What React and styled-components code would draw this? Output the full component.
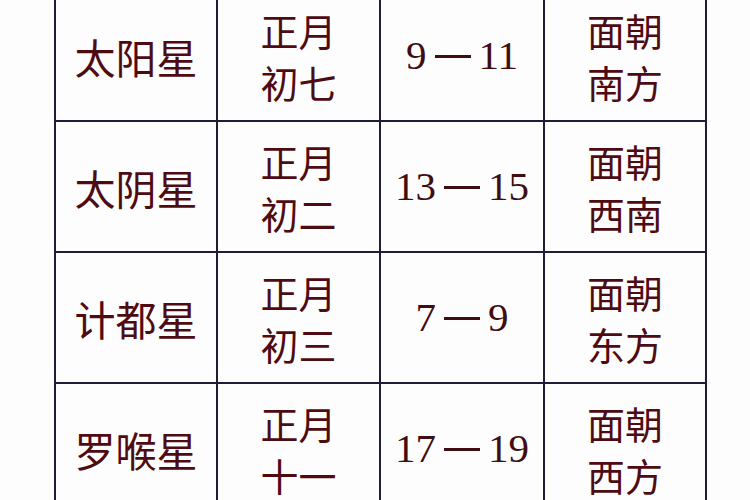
import React from "react";
import styled, { createGlobalStyle } from "styled-components";

const Global = createGlobalStyle`
  html, body {
    margin: 0;
    padding: 0;
    background: #ffffff;
    overflow: hidden;
  }
`;

const Page = styled.div`
  width: 750px;
  height: 500px;
  overflow: hidden;
  background: #fdfdfd;
`;

const Table = styled.div`
  display: grid;
  grid-template-columns: 162px 163px 164px 162px;
  grid-auto-rows: 131px;
  margin: -11px 0 0 54px;
  width: max-content;
  border-top: 2px solid #1d1d3a;
  border-left: 2px solid #1d1d3a;
`;

const Cell = styled.div`
  display: flex;
  flex-direction: column;
  align-items: center;
  justify-content: center;
  border-right: 2px solid #1d1d3a;
  border-bottom: 2px solid #1d1d3a;
  color: #4e0c12;
  font-family: "Noto Sans CJK SC", sans-serif;
  font-size: ${(p) => (p.$wide ? "41px" : "38px")};
  line-height: 52px;
`;

const Range = styled.span`
  display: flex;
  align-items: center;
  gap: 8px;
  font-family: "Liberation Serif", serif;
  font-size: 41px;
  line-height: 1;
  color: #3f0d12;
`;

const Dash = styled.span`
  display: inline-block;
  width: 36px;
  height: 3px;
  background: #3f0d12;
  margin-top: 2px;
`;

const rows = [
  ["太阳星", ["正月", "初七"], ["9", "11"], ["面朝", "南方"]],
  ["太阴星", ["正月", "初二"], ["13", "15"], ["面朝", "西南"]],
  ["计都星", ["正月", "初三"], ["7", "9"], ["面朝", "东方"]],
  ["罗喉星", ["正月", "十一"], ["17", "19"], ["面朝", "西方"]],
];

export default function App() {
  return (
    <Page>
      <Global />
      <Table>
        {rows.map((r, i) => (
          <React.Fragment key={i}>
            <Cell $wide>{r[0]}</Cell>
            <Cell>
              <span>{r[1][0]}</span>
              <span>{r[1][1]}</span>
            </Cell>
            <Cell>
              <Range>
                <span>{r[2][0]}</span>
                <Dash />
                <span>{r[2][1]}</span>
              </Range>
            </Cell>
            <Cell>
              <span>{r[3][0]}</span>
              <span>{r[3][1]}</span>
            </Cell>
          </React.Fragment>
        ))}
      </Table>
    </Page>
  );
}
